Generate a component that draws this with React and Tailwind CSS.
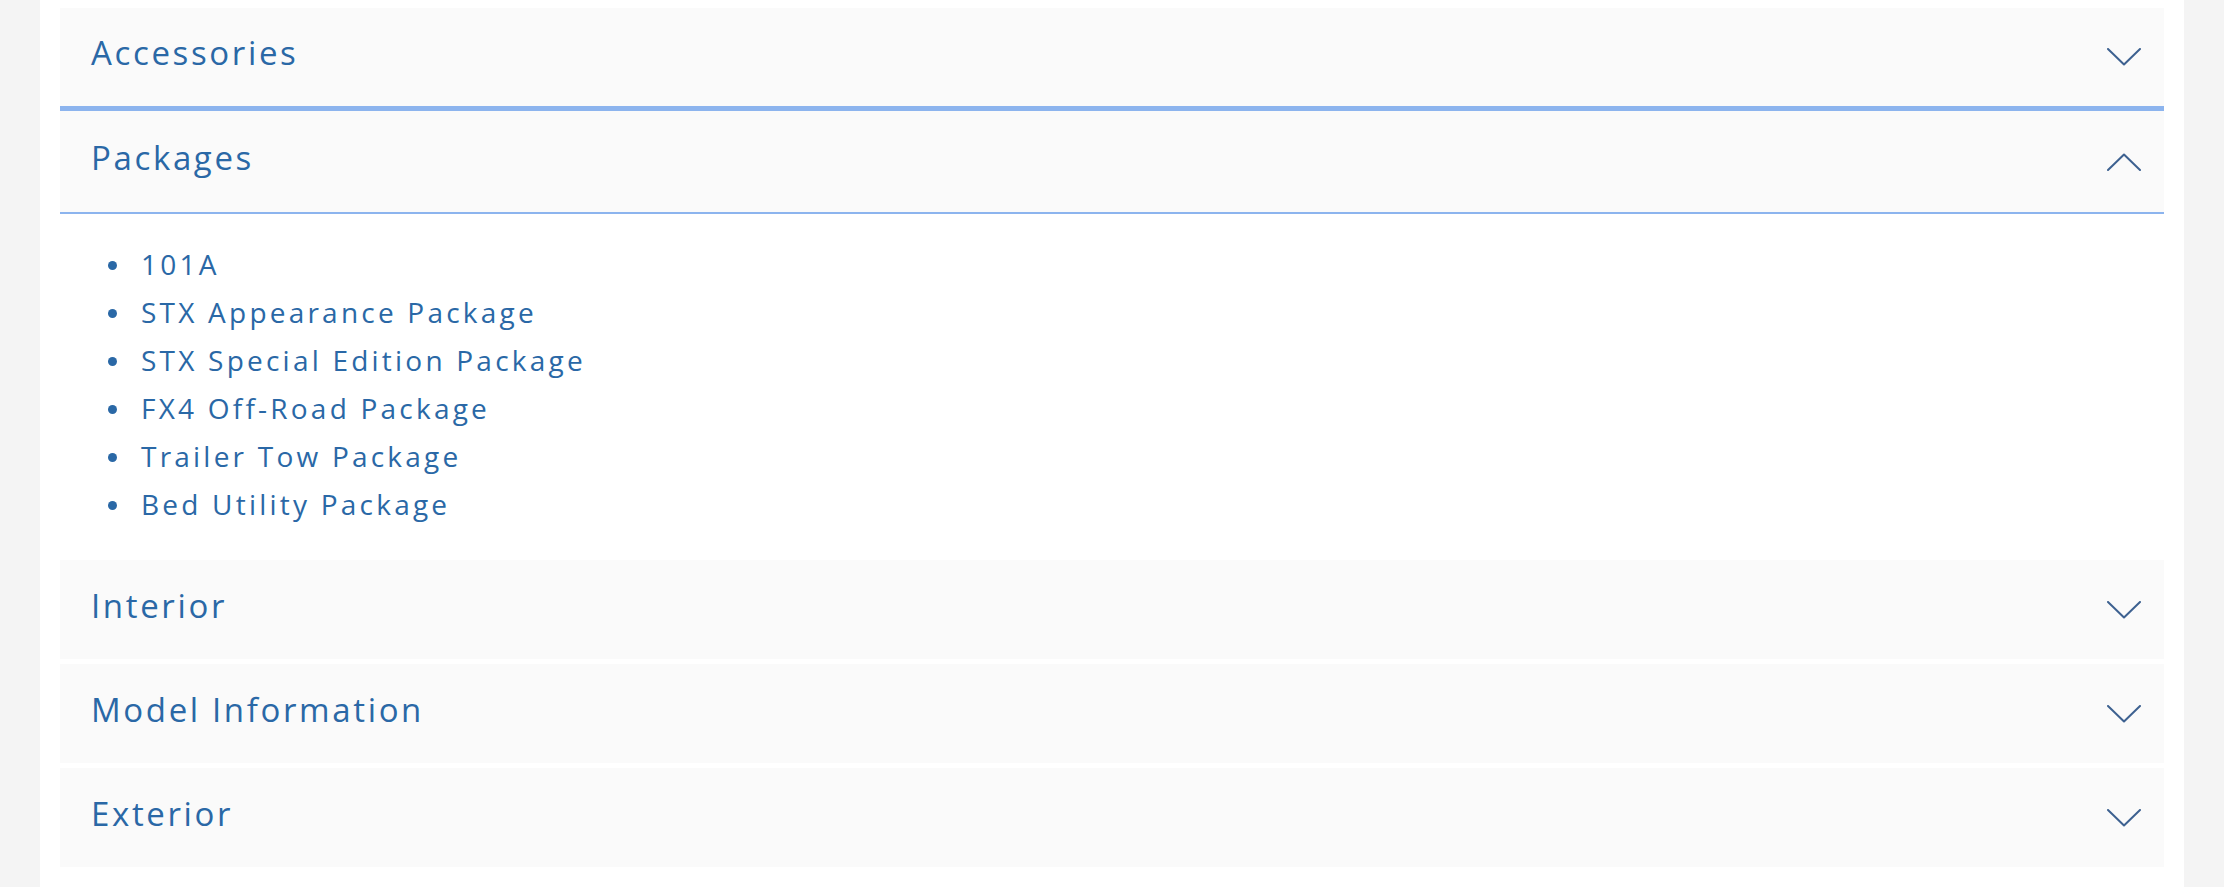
import React from "react";

const Chevron = ({ up }) => (
  <svg width="34" height="18" viewBox="0 0 34 18" fill="none" className="shrink-0">
    <polyline
      points={up ? "1,17 17,1.5 33,17" : "1,1 17,16.5 33,1"}
      stroke="#3d6190"
      strokeWidth="2"
      strokeLinejoin="round"
      strokeLinecap="round"
    />
  </svg>
);

const Header = ({ title, up, className = "" }) => (
  <div
    className={
      "flex items-center justify-between bg-[#fafafa] pl-[31px] pr-[23px] " + className
    }
  >
    <span className="text-[33px] leading-none tracking-[0.08em] text-[#2a68a6] pb-[9px]">
      {title}
    </span>
    <Chevron up={up} />
  </div>
);

const items = [
  "101A",
  "STX Appearance Package",
  "STX Special Edition Package",
  "FX4 Off-Road Package",
  "Trailer Tow Package",
  "Bed Utility Package",
];

export default function App() {
  return (
    <div
      className="w-full h-[887px] bg-[#f4f4f4] flex"
      style={{ fontFamily: '"Open Sans", "Noto Sans", sans-serif' }}
    >
      <div className="mx-[40px] flex-1 bg-white px-[20px] pt-[8px] flex flex-col">
        <Header title="Accessories" className="h-[98px]" />
        <div className="h-[5px] bg-[#8cb4ee]" />
        <Header title="Packages" up className="h-[103px] border-b-2 border-[#8cb4ee]" />
        <ul className="pt-[27px] pb-[31px] pl-[48px] flex flex-col">
          {items.map((t) => (
            <li key={t} className="flex items-center h-[48px]">
              <span className="w-[9px] h-[9px] rounded-full bg-[#2a68a6] mr-[24px]" />
              <span className="text-[28px] leading-none tracking-[0.115em] text-[#2a68a6] pb-[2px]">
                {t}
              </span>
            </li>
          ))}
        </ul>
        <div className="flex flex-col gap-[5px]">
          <Header title="Interior" className="h-[99px]" />
          <Header title="Model Information" className="h-[99px]" />
          <Header title="Exterior" className="h-[99px]" />
        </div>
      </div>
    </div>
  );
}
